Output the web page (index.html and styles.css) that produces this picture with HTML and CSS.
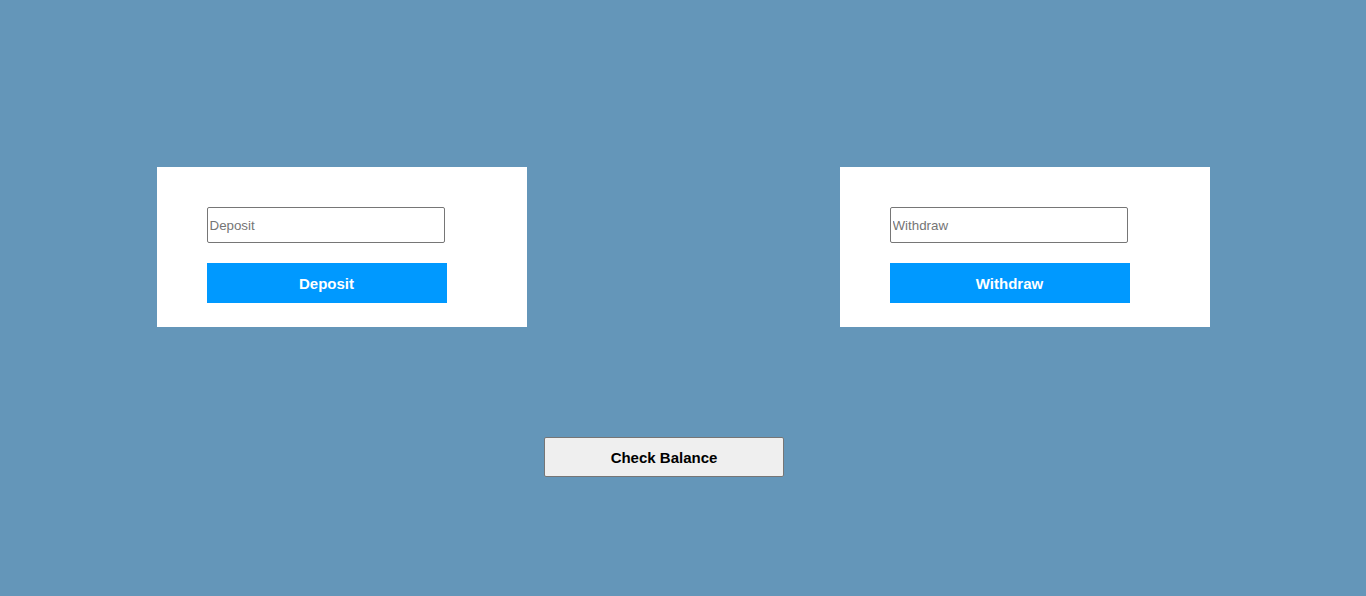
FILE: index.html
```html
<!DOCTYPE html>
<html lang="en">
<head>
<meta charset="utf-8">
<title>Bank</title>
<link rel="stylesheet" href="styles.css">
</head>
<body>
<main class="page">
  <div class="cards">
    <form class="card">
      <input class="field" type="number" placeholder="Deposit">
      <button class="action" type="button">Deposit</button>
    </form>
    <form class="card">
      <input class="field" type="number" placeholder="Withdraw">
      <button class="action" type="button">Withdraw</button>
    </form>
  </div>
  <div class="balance-row">
    <button class="balance" type="button">Check Balance</button>
  </div>
</main>
</body>
</html>
```

FILE: styles.css
```css
html, body {
  margin: 0;
  padding: 0;
  height: 100%;
}
body {
  background: #6496b9;
  font-family: "Liberation Sans", Arial, sans-serif;
}
.page {
  display: flex;
  flex-direction: column;
  padding-top: 167px;
}
.cards {
  display: flex;
  justify-content: space-around;
}
.card {
  width: 370px;
  height: 160px;
  box-sizing: border-box;
  background: #ffffff;
  padding: 40px 50px 0;
  margin: 0;
  display: flex;
  flex-direction: column;
  align-items: flex-start;
  gap: 20px;
}
.field {
  width: 238px;
  height: 36px;
  box-sizing: border-box;
  margin: 0;
  border: 1px solid #767676;
  border-radius: 2px;
  padding: 1px 2px;
  font-family: "Liberation Sans", Arial, sans-serif;
  font-size: 13.333px;
  background: #fff;
  -moz-appearance: textfield;
}
.field::-webkit-outer-spin-button,
.field::-webkit-inner-spin-button {
  -webkit-appearance: none;
  margin: 0;
}
.field::placeholder {
  color: #757575;
}
.action {
  width: 240px;
  height: 40px;
  margin: 0;
  border: none;
  background: #0099ff;
  color: #ffffff;
  font-family: "Liberation Sans", Arial, sans-serif;
  font-weight: bold;
  font-size: 15px;
  cursor: pointer;
}
.balance-row {
  display: flex;
  padding-left: 544px;
  margin-top: 110px;
}
.balance {
  width: 240px;
  height: 40px;
  margin: 0;
  box-sizing: border-box;
  border: 1px solid #767676;
  border-radius: 2px;
  background: #efefef;
  color: #000;
  font-family: "Liberation Sans", Arial, sans-serif;
  font-weight: bold;
  font-size: 15px;
  cursor: pointer;
}
```
